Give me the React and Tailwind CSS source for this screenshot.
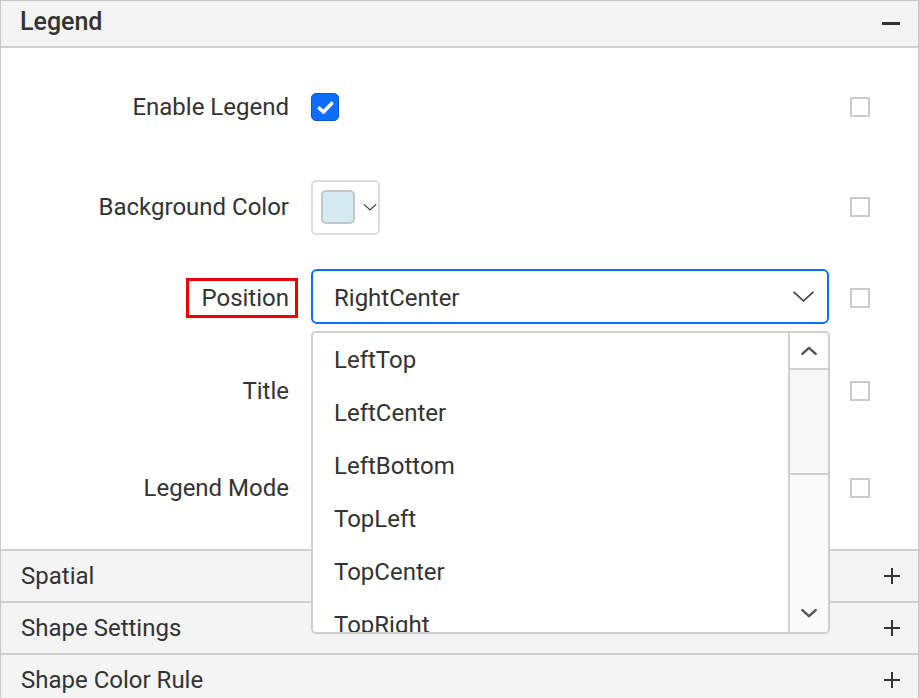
import React from 'react';

const positions = ['LeftTop', 'LeftCenter', 'LeftBottom', 'TopLeft', 'TopCenter', 'TopRight'];

// petite case à cocher grise de la colonne de droite
const SideBox = () => <div className="w-5 h-5 border-2 border-[#cbcbcb] bg-white shrink-0" />;

const Chevron = ({ up = false, className = '', stroke = 1.6 }) => (
  <svg viewBox="0 0 24 12" className={className} fill="none" stroke="currentColor" strokeWidth={stroke} strokeLinecap="round" strokeLinejoin="round">
    {up ? <path d="M2 11 L12 2 L22 11" /> : <path d="M2 1 L12 10 L22 1" />}
  </svg>
);

const Row = ({ label, mt, children, boxed }) => (
  <div className={`flex items-center h-14 ${mt}`}>
    <div className="w-[288px] flex justify-end">
      <span className="relative leading-none">
        {label}
        {boxed && <span className="absolute -left-[15px] -right-[9px] -top-[8px] -bottom-[8px] border-[3px] border-[#ee0000]" />}
      </span>
    </div>
    <div className="ml-[22px] w-[518px] flex items-center">{children}</div>
    <div className="ml-[21px]"><SideBox /></div>
  </div>
);

const SectionHeader = ({ title }) => (
  <div className="h-[52px] border-t-2 border-[#d0d0d0] bg-[#f4f4f4] flex items-center justify-between pl-[20px] pr-[18px]">
    <span>{title}</span>
    <svg viewBox="0 0 16 16" className="w-4 h-4 text-[#333]" stroke="currentColor" strokeWidth="2">
      <path d="M0 8 H16 M8 0 V16" />
    </svg>
  </div>
);

export default function App() {
  return (
    <div className="w-[919px] h-[698px] bg-white font-['Roboto',sans-serif] text-[24px] text-[#333] overflow-hidden">
      <div className="relative h-[698px] border border-[#c8c8c8]">
        {/* en-tête Legend */}
        <div className="h-[47px] bg-[#f4f4f4] border-b-2 border-[#d0d0d0] flex items-center justify-between pl-[19px] pr-[18px]">
          <span className="text-[25px] font-medium leading-none -mt-[4px]">Legend</span>
          <div className="w-[18px] h-[2.5px] bg-[#333]" />
        </div>

        <div className="h-[501px] flex flex-col">
          <Row label="Enable Legend" mt="mt-[31px]">
            <div className="w-7 h-7 rounded-[5px] bg-[#0d6efd] border border-[#0a58ca] flex items-center justify-center">
              <svg viewBox="0 0 16 16" className="w-[19px] h-[19px]" fill="none" stroke="white" strokeWidth="3" strokeLinecap="round" strokeLinejoin="round">
                <path d="M2.8 8.6 L6.3 11.8 L13.2 4.6" />
              </svg>
            </div>
          </Row>

          <Row label="Background Color" mt="mt-[44px]">
            <div className="w-[69px] h-[55px] border-2 border-[#dedede] rounded-[5px] flex items-center pl-[8px] gap-[8px]">
              <div className="w-[34px] h-[34px] rounded-[5px] border-2 border-[#c6c6c6] bg-[#d4ebf2]" />
              <Chevron className="w-[14px] h-[7px] text-[#333]" stroke={2} />
            </div>
          </Row>

          <Row label="Position" mt="mt-[35px]" boxed>
            <div className="w-[518px] h-[55px] -mt-[3px] border-2 border-[#0d6efd] rounded-[6px] flex items-center justify-between pl-[21px] pr-[12px]">
              <span className="mt-[3px]">RightCenter</span>
              <Chevron className="w-[23px] h-[12px] text-[#444]" stroke={1.7} />
            </div>
          </Row>

          <Row label="Title" mt="mt-[37px]">
            <div className="w-[520px] h-[58px] border-2 border-[#d6d6d6] rounded-[5px]" />
          </Row>

          <Row label="Legend Mode" mt="mt-[41px]">
            <div className="w-[518px] h-[55px] border-2 border-[#d6d6d6] rounded-[5px]" />
          </Row>
        </div>

        <SectionHeader title="Spatial" />
        <SectionHeader title="Shape Settings" />
        <SectionHeader title="Shape Color Rule" />

        {/* liste déroulante ouverte */}
        <div className="absolute left-[310px] top-[330px] w-[519px] h-[303px] z-10 bg-white border-2 border-[#cfcfcf] rounded-[5px] flex overflow-hidden">
          <div className="flex-1 flex flex-col">
            {positions.map(p => (
              <div key={p} className="h-[53px] shrink-0 flex items-center pl-[21px]">{p}</div>
            ))}
          </div>
          <div className="w-[40px] border-l-2 border-[#cfcfcf] bg-[#fafafa] flex flex-col">
            <div className="h-[37px] flex items-center justify-center border-b-2 border-[#d0d0d0] bg-white">
              <Chevron up className="w-[16px] h-[9px] text-[#555]" stroke={3.6} />
            </div>
            <div className="h-[105px] border-b-2 border-[#d0d0d0] bg-[#f8f8f8]" />
            <div className="flex-1 flex items-end justify-center pb-[14px]">
              <Chevron className="w-[16px] h-[9px] text-[#555]" stroke={3.6} />
            </div>
          </div>
        </div>
      </div>
    </div>
  );
}
